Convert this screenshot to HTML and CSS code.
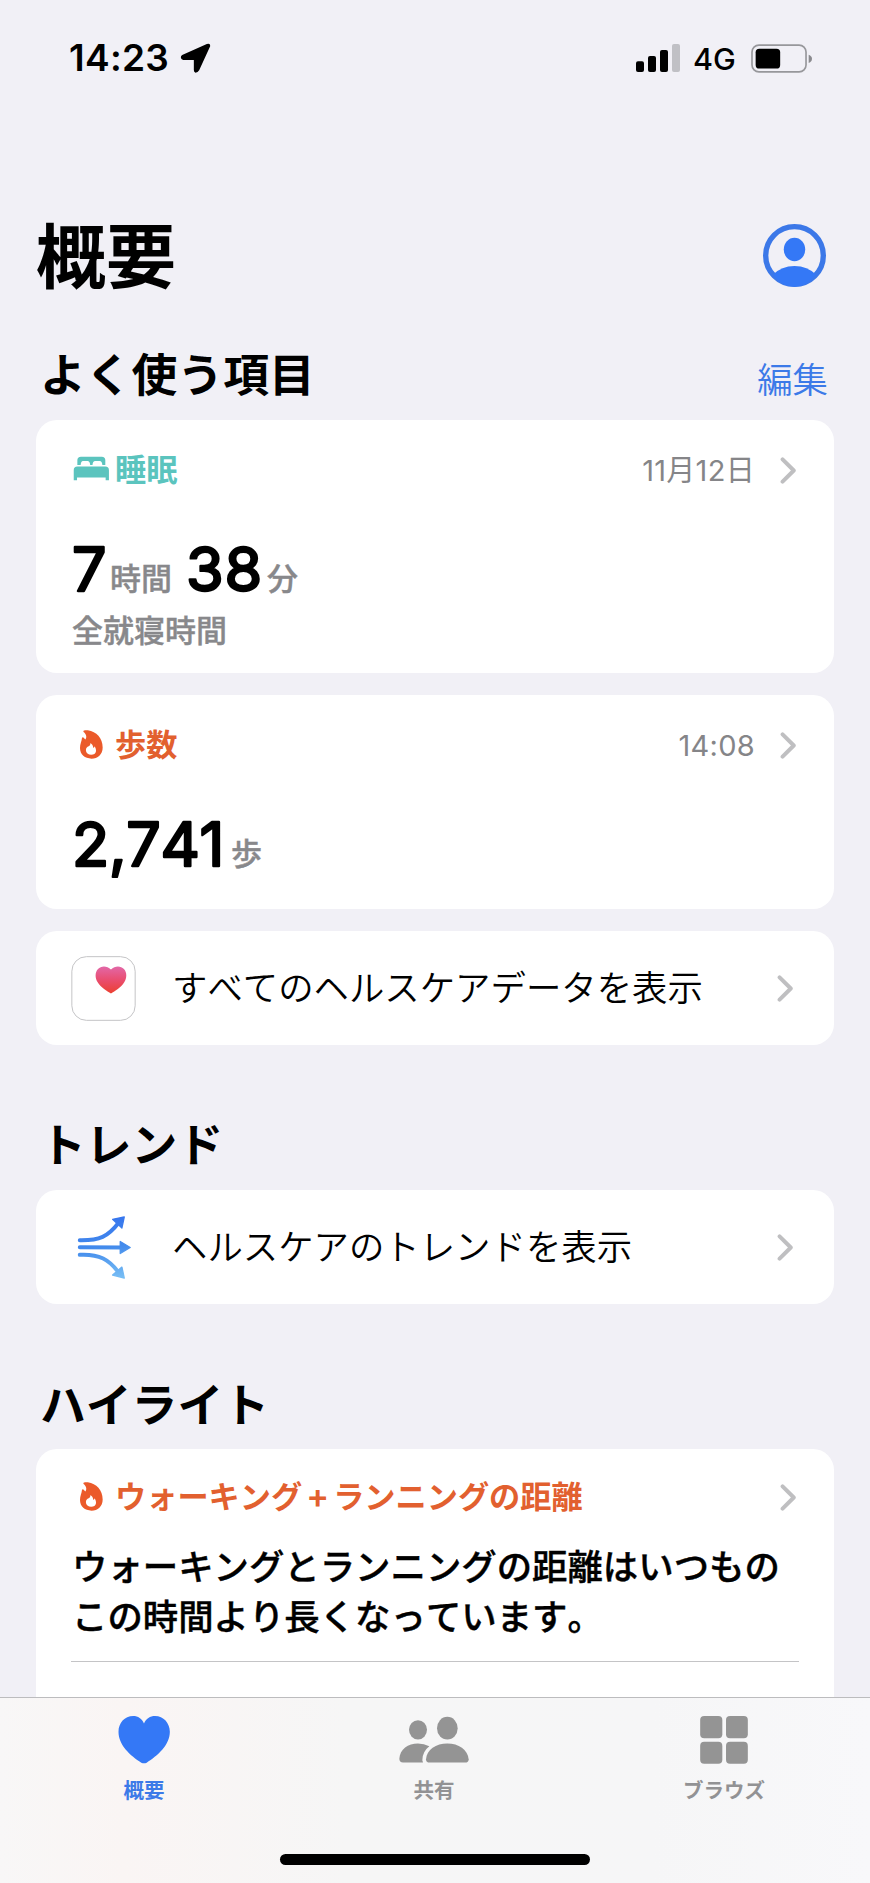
FILE: index.html
```html
<!DOCTYPE html>
<html lang="ja">
<head>
<meta charset="utf-8">
<title>概要</title>
<link rel="stylesheet" href="styles.css">
</head>
<body>
<svg class="defs" width="0" height="0" aria-hidden="true">
  <defs>
    <symbol id="chevron" viewBox="0 0 50 82"><path d="M7 7 L41 41 L7 75" fill="none" stroke="#bfbfc1" stroke-width="12" stroke-linecap="round" stroke-linejoin="round"/></symbol>
    <symbol id="flame" viewBox="240 148 70 88"><path fill="#eb5a2a" fill-rule="evenodd" d="M250 151 C252 148 258 148 264 149 C290 154 309 172 309 201 C309 222 294 235 275 235 C255 235 240 223 240 203 C240 190 245 182 246 172 C247 169 250 169 252 172 L256 177 C262 170 259 160 251 154 Z M271 188 C273 194 268 197 263 199 C254 205 257 223 274 223 C291 223 292 207 284 197 C283 202 281 203 280 200 C280 195 276 189 271 188 Z"/></symbol>
  </defs>
</svg>
<main class="screen">
  <header class="status">
    <div class="status-left">
      <span class="clock">14:23</span>
      <svg class="location" viewBox="538 130 92 90"><path d="M544 166 L618 133 Q629 129 628 140 L595 212 Q591 219 584 219 Q579 218 579 211 V181 H547 Q540 180 540 173 Q540 168 544 166Z"/></svg>
    </div>
    <div class="status-right">
      <svg class="signal" viewBox="603 131 132 84"><rect x="603" y="183" width="24" height="32" rx="6"/><rect x="639" y="167" width="24" height="48" rx="6"/><rect x="675" y="149" width="24" height="66" rx="6"/><rect x="711" y="131" width="24" height="84" rx="6" fill="#c0c0c5"/></svg>
      <span class="network">4G</span>
      <svg class="battery" viewBox="945 129 184 87"><rect x="948" y="132" width="163" height="81" rx="21" fill="none" stroke="#97979b" stroke-width="5"/><rect x="959" y="143" width="74" height="60" rx="11"/><path d="M1119 161 Q1129 165 1129 173 Q1129 182 1119 186Z" fill="#8a8a8e"/></svg>
    </div>
  </header>

  <div class="title-row">
    <h1>概要</h1>
    <svg class="profile" viewBox="985 673 188 188"><circle cx="1079" cy="767" r="86" fill="none" stroke="#3c78e8" stroke-width="16"/><ellipse cx="1079" cy="749" rx="32" ry="35" fill="#3478f6"/><path d="M1015 824 Q1040 798 1079 798 Q1118 798 1143 824 Q1118 860 1079 860 Q1040 860 1015 824Z" fill="#3478f6"/></svg>
  </div>

  <div class="section-head first"><h2>よく使う項目</h2><a class="edit">編集</a></div>

  <section class="card sleep">
    <div class="card-head">
      <span class="icon-box"><svg class="bed" viewBox="220 406 110 76"><path fill="#5bc4be" d="M232 433 V419 Q232 408 243 408 H306 Q317 408 317 419 V433 H308 Q307 421 300 421 H286 Q279 421 278 433 H271 Q270 421 263 421 H249 Q243 421 242 433Z M221 480 V449 Q221 438 232 438 H317 Q328 438 328 449 V480 H318 V471 H231 V480Z"/></svg></span>
      <span class="label teal">睡眠</span><span class="when">11月12日</span><svg class="chev"><use href="#chevron"/></svg>
    </div>
    <div class="value"><svg class="num seven"><text x="0" y="49">7</text></svg><span class="unit u-hours">時間</span><svg class="num thirty"><text x="0" y="49">38</text></svg><span class="unit">分</span></div>
    <div class="caption">全就寝時間</div>
  </section>

  <section class="card steps">
    <div class="card-head">
      <span class="icon-box"><svg class="flame"><use href="#flame"/></svg></span>
      <span class="label orange">歩数</span><span class="when">14:08</span><svg class="chev"><use href="#chevron"/></svg>
    </div>
    <div class="value"><svg class="num count"><text x="0" y="49">2,741</text></svg><span class="unit">歩</span></div>
  </section>

  <section class="card link-card all-data">
    <svg class="app-icon" viewBox="214 825 195 196"><defs><linearGradient id="pink" x1="0" y1="0" x2="0" y2="1"><stop offset="0" stop-color="#e268a8"/><stop offset=".5" stop-color="#e94d6f"/><stop offset="1" stop-color="#ec4030"/></linearGradient></defs><rect x="216" y="827" width="191" height="192" rx="44" fill="#fff" stroke="#c4c4c6" stroke-width="3"/><path fill="url(#pink)" d="M334 866 C322 853 304 854 295 864 C285 874 286 892 294 904 C304 920 322 930 334 938 C346 930 364 920 374 904 C382 892 383 874 373 864 C364 854 346 853 334 866Z"/></svg>
    <span class="link-text">すべてのヘルスケアデータを表示</span><svg class="chev"><use href="#chevron"/></svg>
  </section>

  <div class="section-head trend"><h2>トレンド</h2></div>

  <section class="card link-card">
    <svg class="arrows" viewBox="214 372 195 196"><defs><linearGradient id="blue" gradientUnits="userSpaceOnUse" x1="300" y1="377" x2="320" y2="564"><stop offset="0" stop-color="#3674ee"/><stop offset=".5" stop-color="#438bec"/><stop offset="1" stop-color="#77bdf4"/></linearGradient></defs><g fill="none" stroke="url(#blue)" stroke-width="12" stroke-linecap="round"><path d="M240 448 C300 449 325 437 356 397"/><path d="M240 469.500 L366 470"/><path d="M240 492 C300 489 329 508 356 544"/></g><g fill="url(#blue)" stroke="url(#blue)" stroke-width="4" stroke-linejoin="round"><path d="M374 378 L339 385 L367 411Z"/><path d="M392 470 L362 452 V488Z"/><path d="M374 562 L367 529 L339 553Z"/></g></svg>
    <span class="link-text">ヘルスケアのトレンドを表示</span><svg class="chev"><use href="#chevron"/></svg>
  </section>

  <div class="section-head highlight"><h2>ハイライト</h2></div>

  <section class="card walking">
    <div class="card-head">
      <span class="icon-box"><svg class="flame"><use href="#flame"/></svg></span>
      <span class="label orange">ウォーキング<span class="plus">+</span>ランニングの距離</span><svg class="chev"><use href="#chevron"/></svg>
    </div>
    <p class="summary">ウォーキングとランニングの距離はいつもの<br>この時間より長くなっています。</p>
    <div class="divider"></div>
  </section>
</main>

<nav class="tabs">
  <div class="tab-row">
    <div class="tab active"><svg viewBox="340 855 186 146"><path fill="#3478f6" d="M433 880 C427 866 415 858 401 858 C375 858 357 879 357 905 C357 945 393 977 425 997 Q433 1001 441 997 C473 977 510 945 510 905 C510 879 491 858 466 858 C451 858 439 866 433 880Z"/></svg><span>概要</span></div>
    <div class="tab"><svg viewBox="1196 855 216 146"><g fill="#949494"><ellipse cx="1256" cy="899" rx="27" ry="29"/><path d="M1211 997 Q1200 997 1200 986 C1202 957 1226 940 1256 940 Q1274 940 1290 948 Q1269 964 1269 990 L1271 997Z"/><ellipse cx="1344" cy="894" rx="31" ry="34"/><path d="M1291 997 Q1280 997 1280 987 C1282 958 1310 940 1344 940 C1378 940 1405 958 1408 987 Q1408 997 1397 997Z"/></g></svg><span>共有</span></div>
    <div class="tab"><svg viewBox="773 855 186 146"><g fill="#949494"><rect x="795" y="858" width="66" height="66" rx="12"/><rect x="872" y="858" width="65" height="66" rx="12"/><rect x="795" y="935" width="66" height="65" rx="12"/><rect x="872" y="935" width="65" height="65" rx="12"/></g></svg><span>ブラウズ</span></div>
  </div>
  <div class="home-bar"></div>
</nav>
</body>
</html>
```
FILE: styles.css
```css
* { box-sizing: border-box; }
body {
  margin: 0;
  width: 870px;
  height: 1883px;
  overflow: hidden;
  display: flex;
  flex-direction: column;
  background: #f1f0f6;
  color: #000;
  font-family: "Inter", "Noto Sans CJK JP", sans-serif;
  font-kerning: none;
}
.defs { position: absolute; }
svg { display: block; flex: none; }
h1, h2, p { margin: 0; }
.screen { height: 1697px; overflow: hidden; }

.status {
  height: 116px;
  padding: 0 58px 0 69px;
  display: flex;
  align-items: center;
  justify-content: space-between;
}
.status-left, .status-right { display: flex; align-items: center; }
.clock { width: 111px; font-size: 37px; font-weight: 600; line-height: 44px; letter-spacing: 0.3px; }
.location { width: 31px; height: 30px; }
.signal { width: 44px; height: 28px; }
.network { width: 71px; padding-left: 13px; font-size: 30.500px; font-weight: 450; line-height: 36px; margin-top: 2px; }
.battery { width: 61px; height: 29px; }

.title-row {
  height: 190px;
  padding: 88px 44px 0 36px;
  display: flex;
  justify-content: space-between;
}
h1 { font-size: 70px; font-weight: 700; line-height: 108px; }
.profile { width: 63px; height: 63px; margin-top: 20px; }

.section-head {
  padding: 0 42px 0 40px;
  display: flex;
  justify-content: space-between;
}
.section-head.first { height: 114px; padding-top: 36px; }
.section-head.trend { height: 145px; padding-top: 67px; }
.section-head.highlight { height: 145px; padding-top: 68px; }
h2 { font-size: 45.800px; font-weight: 700; line-height: 68px; }
.edit { font-size: 35.400px; line-height: 52px; margin-top: 13px; color: #3c7ae8; font-weight: 350; }

.card {
  width: 798px;
  margin: 0 36px;
  border-radius: 21px;
  background: #fff;
}
.card + .card { margin-top: 22px; }
.sleep { height: 253px; }
.steps { height: 214px; }
.card-head {
  height: 101px;
  padding: 0 35px 0 36px;
  display: flex;
  align-items: center;
}
.icon-box { width: 43px; height: 32px; display: flex; align-items: center; justify-content: flex-start; }
.bed { width: 37px; height: 25px; margin: -4px 0 0 1px; }
.flame { width: 23px; height: 29px; margin: -2px 0 0 8px; }
.label { font-size: 31.200px; font-weight: 600; line-height: 46px; padding-bottom: 2px; white-space: nowrap; }
.plus { display: inline-block; width: 31px; text-align: center; font-size: 34px; font-weight: 600; line-height: 30px; }
.teal { color: #5bc4be; }
.orange { color: #e2602f; }
.when { margin-left: auto; font-size: 29px; font-weight: 400; line-height: 44px; letter-spacing: 0.300px; color: #858588; }
.chev { width: 17px; height: 27px; margin: 0 2px 0 25px; }
.value { height: 70px; padding-left: 36px; margin-top: 21px; display: flex; align-items: flex-start; }
.num { height: 70px; overflow: visible; }
.num text { font-size: 61px; font-weight: 400; letter-spacing: 0.8px; stroke: #000; stroke-width: 2.400px; stroke-linejoin: round; }
.num.count text { letter-spacing: -0.3px; }
.seven { width: 38px; }
.thirty { width: 81px; }
.count { width: 159px; }
.unit { font-size: 31px; font-weight: 500; line-height: 46px; padding-top: 14px; color: #88888b; }
.unit, .caption { -webkit-text-stroke: 0.400px #88888b; }
.u-hours { width: 76px; }
.caption { padding-left: 36px; font-size: 31px; font-weight: 500; line-height: 46px; color: #88888b; margin-top: -4px; }

.link-card { height: 114px; padding: 0 39px 0 35px; display: flex; align-items: center; }
.app-icon, .arrows { width: 65px; height: 65px; }
.link-text { margin: 2px 0 0 36px; font-size: 35.400px; font-weight: 350; line-height: 52px; }
.link-card .chev { margin: 0 1px 0 auto; }

.walking { height: 300px; }
.walking .card-head { height: 96px; }
.walking .label { padding-bottom: 0; }
.walking .chev { margin-left: auto; }
.summary { padding-left: 36px; margin-top: -2px; font-size: 35.400px; font-weight: 500; line-height: 49.700px; -webkit-text-stroke: 0.400px #000; }
.divider { height: 1px; margin: 19px 35px 0; background: #c4c4c6; }

.tabs {
  height: 186px;
  border-top: 1px solid #bcbcbe;
  background: linear-gradient(90deg, #f8f7f7 0, #faf5f4 14%, #f6f6f6 40%, #f6f6f7 75%, #f8f8fa 100%);
}
.tab-row { height: 155px; display: flex; }
.tab { width: 290px; padding-top: 17px; display: flex; flex-direction: column; align-items: center; color: #929294; }
.tab:first-child { width: 288px; margin-right: 1px; }
.tab svg { width: 72px; height: 49px; }
.tab span { margin-top: 11px; font-size: 20.500px; font-weight: 600; line-height: 32px; }
.tab.active { color: #3c7ae8; }
.home-bar { width: 310px; height: 11px; margin: 1px auto 0; border-radius: 6px; background: #000; }
```
